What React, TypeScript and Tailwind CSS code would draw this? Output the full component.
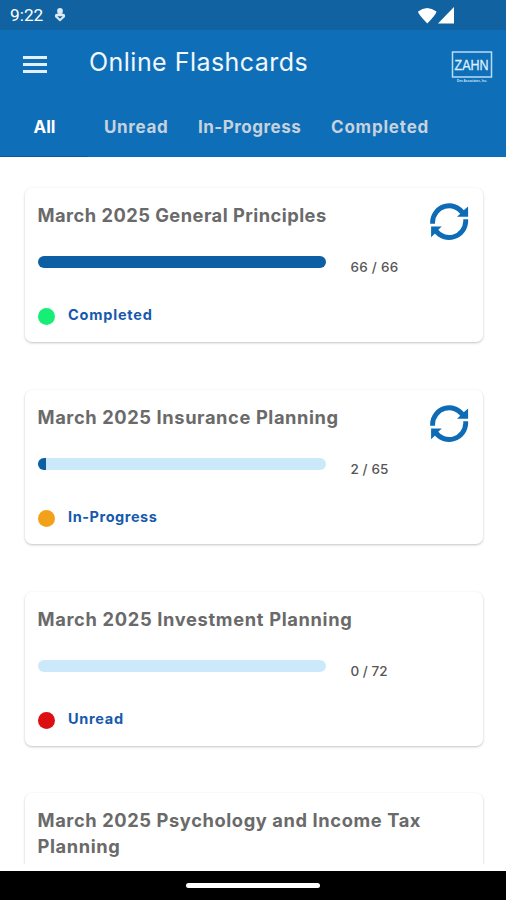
import clsx from 'clsx';

type Progress = {
  done: number;
  total: number;
  countClass: string;
  status: string;
  statusClass: string;
  dotClass: string;
};

type Deck = {
  title: string;
  titleClass: string;
  canReset: boolean;
  progress?: Progress;
};

const decks: Deck[] = [
  {
    title: 'March 2025 General Principles',
    titleClass: 'tracking-[0.47px]',
    canReset: true,
    progress: {
      done: 66,
      total: 66,
      countClass: 'tracking-[0.25px]',
      status: 'Completed',
      statusClass: 'tracking-[0.8px]',
      dotClass: 'bg-[#17ee76]',
    },
  },
  {
    title: 'March 2025 Insurance Planning',
    titleClass: 'tracking-[0.6px]',
    canReset: true,
    progress: {
      done: 2,
      total: 65,
      countClass: 'tracking-[0.1px]',
      status: 'In-Progress',
      statusClass: 'tracking-[0.56px]',
      dotClass: 'bg-[#f3a01b]',
    },
  },
  {
    title: 'March 2025 Investment Planning',
    titleClass: 'tracking-[0.66px]',
    canReset: false,
    progress: {
      done: 0,
      total: 72,
      countClass: 'tracking-[0px]',
      status: 'Unread',
      statusClass: 'tracking-[0.7px]',
      dotClass: 'bg-[#dc1010]',
    },
  },
  {
    title: 'March 2025 Psychology and Income Tax Planning',
    titleClass: 'tracking-[0.6px]',
    canReset: false,
  },
];

function ResetIcon() {
  return (
    <svg viewBox="0 0 40 40" className="h-10 w-10 shrink-0">
      <g fill="none" stroke="#0d6cb5" strokeWidth="4.9">
        <path d="M3.6 21.7V19.8A16.6 16.6 0 0 1 34 11.2" />
        <path d="M36.7 17.3V19.4A16.6 16.6 0 0 1 6.6 28.5" />
      </g>
      <path fill="#0d6cb5" d="M39.1 4.5V14.8H28L31 12L35 8Z" />
      <path fill="#0d6cb5" d="M2.1 24.6H12.8L9.5 27.5L6 31.5L2.1 35.3Z" />
    </svg>
  );
}

function StatusBar() {
  return (
    <div className="flex h-[30px] items-center bg-[#1062a0] pr-[51px] pl-[10px] text-white">
      <span className="pt-[2px] font-[Roboto,sans-serif] text-[17.3px] leading-none">9:22</span>
      <svg viewBox="0 0 12 14" className="ml-[11px] h-[14px] w-3" fill="#dceaf6">
        <circle cx="6" cy="3" r="2.9" />
        <path d="M1 6.5Q6 3.5 11 6.5V9L6 13.6L1 9Z" />
        <path d="M3.3 8.3H8.7L6 10.7Z" fill="#1062a0" />
      </svg>
      <svg viewBox="0 0 38 18" className="ml-auto h-[18px] w-[38px]" fill="#fff">
        <path d="M1 5.5Q10 -1.5 19.5 5.5Q19.5 8 10.3 17.5Q1 8 1 5.5Z" />
        <path d="M37 1V17.5H21Z" />
      </svg>
    </div>
  );
}

function Header() {
  return (
    <header className="flex h-[127px] flex-col bg-[#0e6fb8]">
      <div className="flex h-[66px] items-center pr-[13px] pl-[23px]">
        <div className="flex w-6 flex-col gap-1 pt-[2px]">
          <span className="h-[3px] bg-[#e3effa]" />
          <span className="h-[3px] bg-[#e3effa]" />
          <span className="h-[3px] bg-[#e3effa]" />
        </div>
        <h1 className="ml-[42px] pb-[2px] text-[25px] leading-none tracking-[0.47px] whitespace-nowrap text-[#f1f7fd]">
          Online Flashcards
        </h1>
        <svg viewBox="0 0 42 36" className="mt-[9px] ml-auto h-9 w-[42px] overflow-visible">
          <rect x="1.5" y="2" width="39" height="25" fill="none" stroke="#b7dcf8" strokeWidth="1.5" />
          <text
            x="3.5"
            y="20.3"
            fill="#dceffd"
            stroke="#dceffd"
            strokeWidth="0.3"
            fontFamily="Liberation Sans, sans-serif"
            fontSize="15.5"
            textLength="34"
            lengthAdjust="spacingAndGlyphs"
          >
            ZAHN
          </text>
          <text
            x="6"
            y="31.5"
            fill="#cfe6f9"
            fontFamily="Liberation Sans, sans-serif"
            fontSize="4"
            fontWeight="bold"
            textLength="30"
            lengthAdjust="spacingAndGlyphs"
          >
            Dev Associates, Inc.
          </text>
        </svg>
      </div>
      <nav className="flex h-[60px] items-center pt-[2px] text-[17px] leading-none font-bold whitespace-nowrap text-[#c8d2de]">
        <span className="w-[89px] text-center text-white">All</span>
        <span className="ml-[15px] w-[65px] tracking-[0.65px]">Unread</span>
        <span className="ml-[29px] w-[104px] tracking-[0.5px]">In-Progress</span>
        <span className="ml-[29px] tracking-[0.8px]">Completed</span>
      </nav>
      <div className="h-px w-[88px] bg-[#0b5a99]" />
    </header>
  );
}

function DeckProgress({ progress }: { progress: Progress }) {
  return (
    <>
      <div className="flex h-[52px] items-start pt-2">
        <div className="h-3 w-[288px] overflow-hidden rounded-full bg-[#cbe9fa]">
          <div className="h-full bg-[#0c5fa3]" style={{ width: `${(progress.done / progress.total) * 100}%` }} />
        </div>
        <span className={clsx('ml-[25px] pt-[5px] text-[13.5px] leading-none font-medium text-[#555]', progress.countClass)}>
          {progress.done} / {progress.total}
        </span>
      </div>
      <div className="flex h-[30px] items-center">
        <span className={clsx('mt-[3px] h-[17px] w-[17px] rounded-full', progress.dotClass)} />
        <span
          className={clsx('ml-[13.5px] pt-px text-[14.5px] leading-none font-bold text-[#1759ac]', progress.statusClass)}
        >
          {progress.status}
        </span>
      </div>
    </>
  );
}

function DeckCard({ deck }: { deck: Deck }) {
  return (
    <article className="h-[154px] shrink-0 rounded-[7px] bg-white pr-[14px] pl-[13px] shadow-[0_1px_2.5px_rgba(0,0,0,0.24)]">
      <div className="flex h-[60px] justify-between pt-[14px]">
        <h2 className={clsx('text-[18.3px] leading-[26px] font-bold text-[#6a6a6a]', deck.titleClass)}>
          {deck.title}
        </h2>
        {deck.canReset && <ResetIcon />}
      </div>
      {deck.progress && <DeckProgress progress={deck.progress} />}
    </article>
  );
}

export default function App() {
  return (
    <div className="flex h-[900px] w-[506px] flex-col overflow-hidden bg-white font-[Inter,sans-serif]">
      <StatusBar />
      <Header />
      <main className="flex h-[707px] flex-col gap-[47.8px] overflow-hidden pt-[31px] pr-[23.5px] pl-[24.5px]">
        {decks.map((deck) => (
          <DeckCard key={deck.title} deck={deck} />
        ))}
      </main>
      <div className="mt-[7px] flex h-[29px] items-center justify-center bg-black">
        <div className="h-[5px] w-[134px] rounded-full bg-white" />
      </div>
    </div>
  );
}
